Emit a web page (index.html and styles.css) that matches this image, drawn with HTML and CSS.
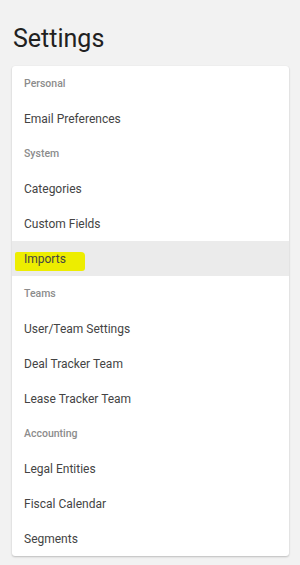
FILE: index.html
```html
<!DOCTYPE html>
<html>
<head>
<meta charset="utf-8">
<link rel="stylesheet" href="styles.css">
</head>
<body>
<main class="page">
  <h1 class="title">Settings</h1>
  <nav class="card">
    <div class="section">Personal</div>
    <div class="item">Email Preferences</div>
    <div class="section">System</div>
    <div class="item">Categories</div>
    <div class="item">Custom Fields</div>
    <div class="item active"><span class="marker"></span><span class="label">Imports</span></div>
    <div class="section">Teams</div>
    <div class="item">User/Team Settings</div>
    <div class="item">Deal Tracker Team</div>
    <div class="item">Lease Tracker Team</div>
    <div class="section">Accounting</div>
    <div class="item">Legal Entities</div>
    <div class="item">Fiscal Calendar</div>
    <div class="item">Segments</div>
  </nav>
</main>
</body>
</html>
```
FILE: styles.css
```css
html, body {
  margin: 0;
  padding: 0;
  background: #f2f2f2;
  font-family: Roboto, "Liberation Sans", sans-serif;
}
.page {
  padding: 24px 11px 8px 12px;
}
.title {
  margin: 0 0 12px 1px;
  font-size: 25px;
  line-height: 30px;
  font-weight: 400;
  color: #212121;
}
.card {
  background: #fff;
  border-radius: 3px;
  box-shadow: 0 1px 2px rgba(0,0,0,0.22), 0 0 1px rgba(0,0,0,0.06);
  display: flex;
  flex-direction: column;
}
.section, .item {
  height: 35px;
  display: flex;
  align-items: center;
  padding-left: 12px;
}
.section {
  font-size: 10.5px;
  font-weight: 500;
  color: #8c8c8c;
}
.item {
  font-size: 12px;
  color: #444;
  padding-top: 1px;
  height: 34px;
}
.active {
  background: #ebebeb;
  position: relative;
}
.label {
  position: relative;
}
.marker {
  position: absolute;
  left: 3px;
  top: 11px;
  width: 70px;
  height: 19px;
  background: #eded00;
  border-radius: 2px 4px 3px 2px;
}
```
